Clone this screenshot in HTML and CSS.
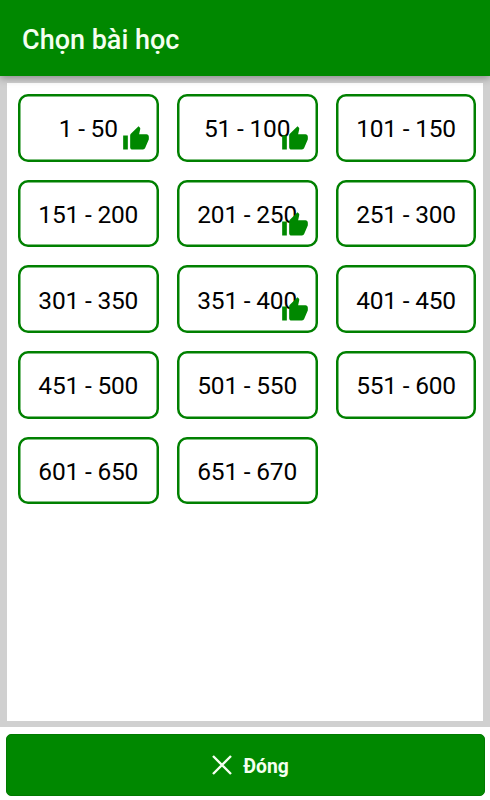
FILE: index.html
```html
<!DOCTYPE html>
<html lang="vi">
<head>
<meta charset="utf-8">
<title>Chọn bài học</title>
<link rel="stylesheet" href="styles.css">
</head>
<body>
<svg width="0" height="0" class="defs">
  <symbol id="thumb" viewBox="0 0 24 24"><path d="M1 21h4V9H1v12zm22-11c0-1.100-.9-2-2-2h-6.310l.95-4.570.03-.32c0-.41-.17-.79-.44-1.060L14.170 1 7.590 7.590C7.220 7.950 7 8.450 7 9v10c0 1.100.9 2 2 2h9c.83 0 1.540-.5 1.840-1.220l3.020-7.050c.09-.23.14-.47.14-.73v-2z"/></symbol>
</svg>
<header class="bar"><h1>Chọn bài học</h1></header>
<main class="frame">
  <div class="grid">
    <button class="card"><span>1 - 50</span><svg class="thumb"><use href="#thumb"/></svg></button>
    <button class="card"><span>51 - 100</span><svg class="thumb"><use href="#thumb"/></svg></button>
    <button class="card"><span>101 - 150</span></button>
    <button class="card"><span>151 - 200</span></button>
    <button class="card"><span>201 - 250</span><svg class="thumb"><use href="#thumb"/></svg></button>
    <button class="card"><span>251 - 300</span></button>
    <button class="card"><span>301 - 350</span></button>
    <button class="card"><span>351 - 400</span><svg class="thumb"><use href="#thumb"/></svg></button>
    <button class="card"><span>401 - 450</span></button>
    <button class="card"><span>451 - 500</span></button>
    <button class="card"><span>501 - 550</span></button>
    <button class="card"><span>551 - 600</span></button>
    <button class="card"><span>601 - 650</span></button>
    <button class="card"><span>651 - 670</span></button>
  </div>
</main>
<footer class="footer">
  <button class="close">
    <svg class="cross" viewBox="0 0 20 20"><path d="M1 1 19 19M19 1 1 19"/></svg>
    <span>Đóng</span>
  </button>
</footer>
</body>
</html>
```
FILE: styles.css
```css
* { box-sizing: border-box; }
body {
  margin: 0;
  height: 800px;
  display: flex;
  flex-direction: column;
  background: #fff;
  font-family: Roboto, "Liberation Sans", sans-serif;
  overflow: hidden;
}
.defs { position: absolute; }
button { font: inherit; margin: 0; padding: 0; }
.bar {
  height: 76px;
  flex: none;
  padding: 3px 22px 0;
  display: flex;
  align-items: center;
  background: #008800;
  box-shadow: 0 2px 8px rgba(0, 0, 0, .35);
  position: relative;
  z-index: 2;
}
.bar h1 {
  margin: 0;
  font-size: 27px;
  font-weight: 500;
  line-height: 32px;
  color: #f4fff0;
}
.frame {
  height: 651px;
  flex: none;
  border: solid #d0d0d0;
  border-width: 7px 7px 6px;
  padding: 11px 6.500px 0 10.800px;
}
.grid {
  display: grid;
  grid-template-columns: repeat(3, 140.900px);
  grid-auto-rows: 67.700px;
  gap: 18px;
}
.card {
  position: relative;
  display: flex;
  align-items: center;
  justify-content: center;
  border: 0;
  box-shadow: inset 0 0 0 2.500px #008000;
  border-radius: 10px;
  background: #fff;
  color: #000;
  font-size: 24.500px;
  letter-spacing: -0.200px;
  line-height: 30px;
}
.card span { padding-top: 3px; }
.thumb {
  position: absolute;
  right: 8.900px;
  bottom: 8.700px;
  width: 28px;
  height: 28px;
  fill: #008800;
}
.footer { padding: 7px 5.500px 0; }
.close {
  width: 100%;
  height: 61.500px;
  border: 1px solid #007a00;
  border-radius: 5px;
  background: #008800;
  color: #f4fff0;
  display: flex;
  align-items: center;
  justify-content: center;
  gap: 11px;
  padding-left: 11px;
  font-size: 19.300px;
  font-weight: 700;
}
.close span { padding-top: 3px; }
.cross {
  width: 20px;
  height: 20px;
  fill: none;
  stroke: #f4fff0;
  stroke-width: 2.400;
}
```
